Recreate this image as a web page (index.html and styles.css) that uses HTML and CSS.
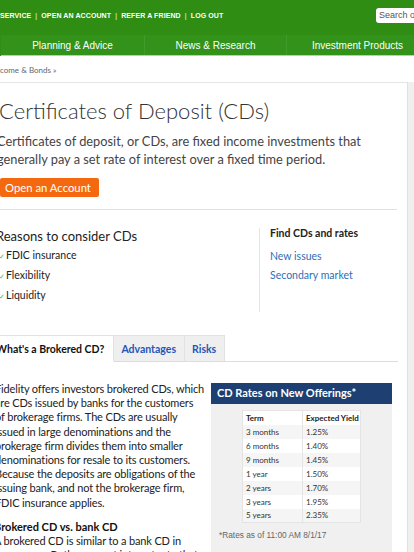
FILE: index.html
```html
<!DOCTYPE html>
<html>
<head>
<meta charset="utf-8">
<link rel="stylesheet" href="styles.css">
</head>
<body>
<header class="top">
  <div class="utility">
    <nav class="util-links">SERVICE <span class="pipe">|</span> OPEN AN ACCOUNT <span class="pipe">|</span> REFER A FRIEND <span class="pipe">|</span> LOG OUT</nav>
    <div class="search">Search or</div>
  </div>
  <nav class="mainnav">
    <div class="navitem">Planning &amp; Advice</div>
    <div class="navitem">News &amp; Research</div>
    <div class="navitem">Investment Products</div>
  </nav>
</header>
<div class="crumbs">come &amp; Bonds »</div>
<div class="layout">
  <main class="main">
    <h1 class="title">Certificates of Deposit (CDs)</h1>
    <p class="lead">Certificates of deposit, or CDs, are fixed income investments that generally pay a set rate of interest over a fixed time period.</p>
    <div class="btnrow"><a class="btn">Open an Account</a></div>
    <section class="reasons">
      <div class="reasons-left">
        <h2 class="reasons-title">Reasons to consider CDs</h2>
        <ul class="checks">
          <li><span class="tick">✓</span>FDIC insurance</li>
          <li><span class="tick">✓</span>Flexibility</li>
          <li><span class="tick">✓</span>Liquidity</li>
        </ul>
      </div>
      <div class="reasons-right">
        <h3 class="find">Find CDs and rates</h3>
        <a class="link">New issues</a>
        <a class="link">Secondary market</a>
      </div>
    </section>
    <div class="tabs">
      <div class="tab active">What's a Brokered CD?</div>
      <div class="tab">Advantages</div>
      <div class="tab">Risks</div>
      <div class="tabfill"></div>
    </div>
    <section class="tabbody">
      <div class="copy">
        <p>Fidelity offers investors brokered CDs, which<br>are CDs issued by banks for the customers<br>of brokerage firms. The CDs are usually<br>issued in large denominations and the<br>brokerage firm divides them into smaller<br>denominations for resale to its customers.<br>Because the deposits are obligations of the<br>issuing bank, and not the brokerage firm,<br>FDIC insurance applies.</p>
        <h4 class="subhead">Brokered CD vs. bank CD</h4>
        <p class="tight">A brokered CD is similar to a bank CD in<br>many ways. Both pay a set interest rate that</p>
      </div>
      <aside class="rates">
        <div class="rates-head">CD Rates on New Offerings*</div>
        <table class="rtable">
          <tr><th>Term</th><th>Expected Yield</th></tr>
          <tr><td>3 months</td><td>1.25%</td></tr>
          <tr><td>6 months</td><td>1.40%</td></tr>
          <tr><td>9 months</td><td>1.45%</td></tr>
          <tr><td>1 year</td><td>1.50%</td></tr>
          <tr><td>2 years</td><td>1.70%</td></tr>
          <tr><td>3 years</td><td>1.95%</td></tr>
          <tr><td>5 years</td><td>2.35%</td></tr>
        </table>
        <div class="note">*Rates as of 11:00 AM 8/1/17</div>
      </aside>
    </section>
  </main>
  <div class="side"></div>
</div>
</body>
</html>
```
FILE: styles.css
```css
* { box-sizing: border-box; }
html, body { margin: 0; padding: 0; }
body {
  width: 414px;
  height: 552px;
  overflow: hidden;
  background: #fff;
  font-family: Lato, "Open Sans", sans-serif;
  color: #333;
}
.top { background: #2e8d12; }
.utility {
  height: 35px;
  display: flex;
  align-items: center;
  justify-content: space-between;
}
.util-links {
  font-family: "Liberation Sans", Arial, sans-serif;
  font-size: 7px;
  font-weight: bold;
  color: #fff;
  letter-spacing: 0.1px;
  white-space: nowrap;
  margin-top: -4px;
}
.pipe { margin: 0 2px; font-weight: normal; }
.search {
  width: 38px;
  height: 15px;
  margin-top: -4px;
  background: #fff;
  border-radius: 3px 0 0 3px;
  font-family: "Liberation Sans", Arial, sans-serif;
  font-size: 9px;
  color: #555;
  padding: 2px 0 0 3px;
  white-space: nowrap;
  overflow: hidden;
}
.mainnav {
  display: grid;
  grid-template-columns: 143px 142px 142px;
  height: 21px;
  border-bottom: 1px solid #a8dc98;
  background: #32921a;
  margin-left: 1px;
}
.navitem {
  font-family: "Liberation Sans", Arial, sans-serif;
  font-size: 10px;
  color: #fff;
  display: flex;
  align-items: center;
  justify-content: center;
  border-left: 1px solid #3f9c2a;
}
.navitem:first-child { border-left: none; }
.crumbs {
  font-size: 8px;
  color: #666;
  height: 27px;
  padding-top: 9px;
  border-bottom: 1px solid #e4e4e4;
  width: 409px;
}
.layout { display: flex; }
.main {
  width: 403px;
  margin-left: -5px;
  flex: none;
}
.side {
  flex: 1;
  margin-left: 9px;
  background: #efefef;
  border-left: 1px solid #e0e0e0;
  margin-top: -1px;
}
.title {
  font-weight: 300;
  font-size: 22px;
  color: #333;
  margin: 15px 0 0 4px;
  line-height: 26px;
}
.lead {
  font-size: 12.8px;
  line-height: 18px;
  color: #444;
  margin: 8px 0 0 2px;
  width: 390px;
}
.btnrow { margin-top: 8px; padding-left: 5px; }
.btn {
  display: inline-block;
  background: #f4690f;
  color: #fff;
  font-size: 11.3px;
  padding: 3px 8px 3px 5px;
  border-radius: 2px;
  line-height: 13px;
}
.reasons {
  margin-top: 12px;
  border-top: 1px solid #e2e2e2;
  width: 402px;
  display: flex;
  padding-top: 18px;
}
.reasons-left { width: 265px; border-right: 1px solid #e4e4e4; padding-bottom: 6px; }
.reasons-title {
  font-weight: 400;
  font-size: 13px;
  color: #222;
  margin: 0 0 0 1px;
  line-height: 17px;
}
.checks { list-style: none; margin: 1px 0 0 0; padding: 0 0 0 4px; }
.checks li {
  font-size: 10.5px;
  color: #222;
  line-height: 19px;
}
.tick {
  color: #5fae2e;
  font-size: 7px;
  display: inline-block;
  width: 4px;
  margin-right: 3px;
}
.reasons-right { padding-left: 10px; display: flex; flex-direction: column; }
.find {
  font-size: 10.5px;
  font-weight: 700;
  color: #222;
  margin: -3px 0 6px 0;
  line-height: 16px;
}
.link {
  color: #2c6fb7;
  font-size: 10.5px;
  line-height: 19px;
}
.tabs {
  display: flex;
  margin-top: 23px;
  height: 27px;
}
.tab {
  font-size: 10.5px;
  font-weight: 700;
  color: #2456b8;
  background: #efefef;
  border-top: 1px solid #e2e2e2;
  border-right: 1px solid #e2e2e2;
  border-bottom: 1px solid #dcdcdc;
  padding: 7px 8px 0 7px;
  white-space: nowrap;
}
.tab.active {
  background: #fff;
  color: #111;
  border-bottom-color: #fff;
  padding-left: 1px;
  padding-right: 9px;
}
.tabfill { flex: 1; border-bottom: 1px solid #dcdcdc; }
.tabbody {
  display: flex;
  padding-top: 20px;
}
.copy { width: 206px; flex: none; white-space: nowrap; }
.copy p {
  font-size: 11px;
  letter-spacing: -0.15px;
  line-height: 14.2px;
  color: #222;
  margin: 0;
}
.subhead {
  font-size: 11px;
  font-weight: 700;
  color: #111;
  margin: 10px 0 0 -1px;
  line-height: 14px;
}
.copy p.tight { margin-left: -1px; }
.rates {
  margin-left: 10px;
  width: 181px;
  flex: none;
  background: #f0f0f0;
  align-self: flex-start;
  margin-top: 1px;
  height: 200px;
}
.rates-head {
  background: #1d3f72;
  color: #fff;
  font-size: 11px;
  font-weight: 700;
  height: 21px;
  padding: 3px 0 0 6px;
}
.rtable {
  border-collapse: collapse;
  table-layout: fixed;
  margin: 6px 0 0 31px;
  width: 119px;
  background: #fff;
  border: 1px solid #e4e4e4;
}
.rtable th, .rtable td {
  font-size: 8px;
  text-align: left;
  height: 14px;
  padding: 0 0 0 3px;
  color: #333;
  border-right: 1px solid #e4e4e4;
  line-height: 12px;
  white-space: nowrap;
  overflow: hidden;
}
.rtable th { font-weight: 700; color: #222; }
.rtable th:first-child, .rtable td:first-child { width: 60px; }
.rtable tr:nth-child(even) { background: #f5f5f5; }
.note {
  font-family: "Liberation Sans", Arial, sans-serif;
  font-size: 8.3px;
  color: #666;
  margin: 7px 0 0 8px;
}
```
